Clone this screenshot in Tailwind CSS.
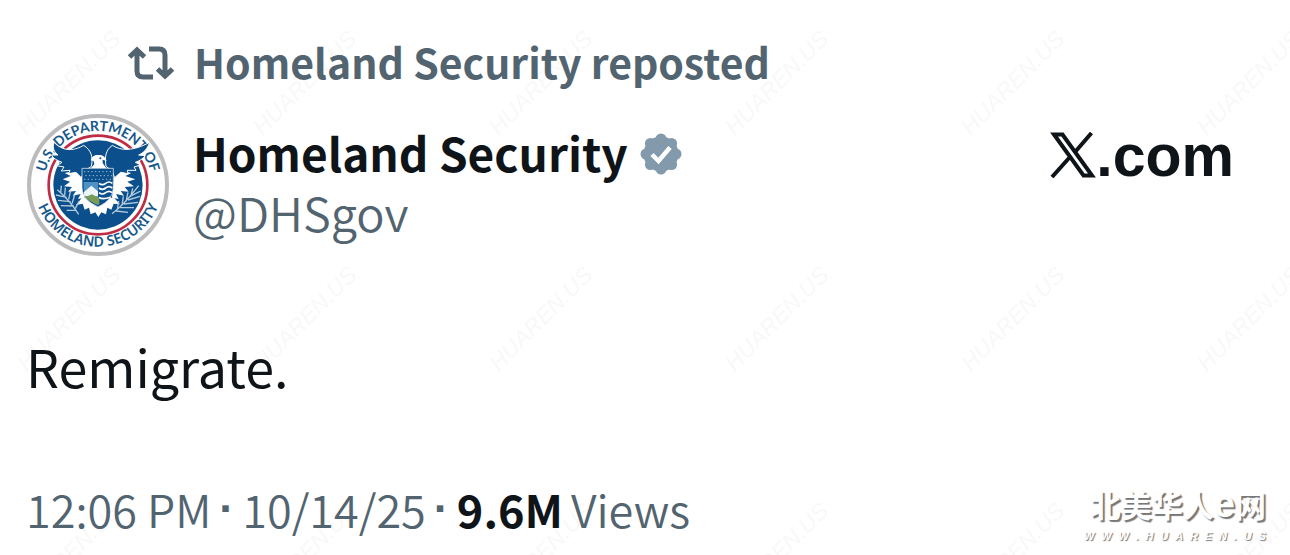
<!DOCTYPE html>
<html lang="en">
<head>
<meta charset="utf-8">
<meta name="viewport" content="width=device-width, initial-scale=1">
<title>Homeland Security on X</title>
<script src="https://cdn.jsdelivr.net/npm/@tailwindcss/browser@4"></script>
</head>
<body class="relative min-h-screen overflow-x-hidden bg-white font-['Noto_Sans_CJK_SC',sans-serif] text-[#0f1419]">
<svg class="pointer-events-none absolute inset-0 h-full w-full" aria-hidden="true">
  <defs>
    <pattern id="mark" width="236" height="236" patternUnits="userSpaceOnUse">
      <text transform="translate(70 84) rotate(-45)" text-anchor="middle" dominant-baseline="middle" font-family="Liberation Sans, sans-serif" font-style="italic" font-size="23" fill="#f8f8f8">HUAREN.US</text>
    </pattern>
  </defs>
  <rect width="100%" height="100%" fill="url(#mark)"/>
</svg>
<article class="relative pt-7">
  <div class="flex h-[66px] items-center gap-5 pl-32 text-[#536471]">
    <svg class="mt-1 h-9 w-[46px] shrink-0" viewBox="0 0 46 36" fill="none" stroke="currentColor" stroke-width="5" aria-hidden="true">
      <path d="M1.500 12 9 5 16.500 12M9 6v20q0 6 6 6h10M21 4h10q6 0 6 6v20M29.500 24l7.500 7L44.500 24"/>
    </svg>
    <p class="text-[41px] leading-none font-bold">Homeland Security reposted</p>
  </div>
  <header class="flex items-start justify-between pt-5 pr-14 pl-[27px]">
    <div class="flex items-start gap-6">
      <svg class="h-[142px] w-[142px] shrink-0" viewBox="-213 -213 426 426" role="img" aria-label="U.S. Department of Homeland Security seal">
        <defs>
          <path id="topring" d="M-153 53A162 162 0 1 1 153 53"/>
          <path id="bottomring" d="M-195 -10A195 195 0 0 0 195 -10"/>
        </defs>
        <circle r="207" fill="#fff" stroke="#bcbcbe" stroke-width="12"/>
        <circle r="148" fill="#fff" stroke="#c02c43" stroke-width="8"/>
        <circle r="134" fill="#0b4f8c"/>
        <g fill="#17588b" font-weight="600">
          <text text-anchor="middle" font-family="Lato, sans-serif" font-weight="700" font-size="42"><textPath href="#topring" startOffset="50%">U.S. DEPARTMENT OF</textPath></text>
          <text text-anchor="middle" font-family="Noto Sans, sans-serif" font-size="43"><textPath href="#bottomring" startOffset="50%">HOMELAND SECURITY</textPath></text>
        </g>
        <path d="M-50-50-72-42-100-36-82-27-106-17-84-10-102 4-78 6-90 20-66 18-76 32-52 27-60 42-40 38ZM50-50 72-42 100-36 82-27 112-17 88-10 108 4 80 6 92 20 68 18 78 32 54 27 62 42 42 38Z" fill="#fff"/>
        <path d="M-132-128C-100-96-67-105-43-119-20-104-14-84-20-56L-40-42-50-22-66-38-88-34-84-44-110-42-102-54-124-58-108-68C-121-73-134-79-140-90L-120-90C-132-100-137-109-132-128ZM155-128C105-101 70-102 43-119 22-104 20-84 24-56L42-42 50-22 68-38 90-34 88-44 114-44 108-54 128-60 112-68C124-73 134-77 142-88L122-90C137-97 147-106 155-128Z" fill="#0b4f8c" stroke="#fff" stroke-width="3"/>
        <path d="M-22-74C-18-87-10-91 3-90 17-90 23-82 26-72L14-76 14-66 25-50H-22L-11-62-13-72Z" fill="#fff"/>
        <circle cx="7" cy="-80" r="3" fill="#0b4f8c"/>
        <path d="M-48 38-66 60-46 56-40 74-27 68-22 88-8 82 1 96 10 82 24 88 28 68 40 74 47 56 66 58 48 38Z" fill="#fff"/>
        <path d="M-48-50H46V8Q46 44 0 66-48 44-48 8Z" fill="#0b4f8c" stroke="#fff" stroke-width="2"/>
        <path d="M-43-9H0V60Q-43 40-43 8Z" fill="#4f91c4"/>
        <path d="M-43 22-20 2 0 19V34H-41Z" fill="#eef5f8"/>
        <path d="M-38 36-18 28 4 40V57L0 60Q-26 50-38 36Z" fill="#789b55"/>
        <path d="M3-5q10 8 20 0t20 0M3 9q10 8 20 0t20 0M3 23q10 8 20 0t20 0M3 37q10 8 34 0" fill="none" stroke="#fff" stroke-width="5"/>
        <path d="M-42-40H42M-38-28H42M-42-17H42" stroke="#9dc0d9" stroke-width="3" stroke-dasharray="4 7"/>
        <g fill="none" stroke="#b4cbdc" stroke-width="4">
          <path d="M-58 88Q-88 42-122 14M-64 76-94 76M-72 63-112 62M-82 50-120 46M-94 37-126 30M-68 70-56 48M-78 56-70 30M-88 43-82 16M-100 31-98 8M-112 22-110 2"/>
          <path d="M42 86Q78 60 122 2M54 78 90 82M66 68 108 68M78 57 120 52M90 45 126 34M102 31 128 18M58 74 62 48M72 62 76 34M84 50 90 22M98 36 104 10"/>
        </g>
      </svg>
      <div class="pt-2">
        <div class="flex items-center gap-3">
          <h1 class="text-[46px] leading-[60px] font-bold">Homeland Security</h1>
          <svg class="mt-1 h-[42px] w-[42px] shrink-0" viewBox="0 0 42 42" role="img" aria-label="Verified government account">
            <g fill="#829aab"><circle cx="21" cy="21" r="17.500"/><circle cx="21" cy="6" r="5.500"/><circle cx="31.600" cy="10.400" r="5.500"/><circle cx="36" cy="21" r="5.500"/><circle cx="31.600" cy="31.600" r="5.500"/><circle cx="21" cy="36" r="5.500"/><circle cx="10.400" cy="31.600" r="5.500"/><circle cx="6" cy="21" r="5.500"/><circle cx="10.400" cy="10.400" r="5.500"/></g>
            <path d="M12 21.500l6.500 6.500L30 14.500" fill="none" stroke="#fff" stroke-width="4.500"/>
          </svg>
        </div>
        <a href="#" class="block text-[47px] leading-[60px] font-[350] text-[#536471]">@DHSgov</a>
      </div>
    </div>
    <a href="#" class="flex items-end pt-[18px]" aria-label="X.com">
      <svg class="h-[46px] w-[46px]" viewBox="0 0 46 46" fill="none" aria-hidden="true">
        <path d="M4 2.500H12.500L42 43.500H33.500ZM41.500 1 25.500 19.500M19.500 25.500 2 45" stroke="#0f1419" stroke-width="4"/>
      </svg>
      <span class="font-['Liberation_Sans',sans-serif] text-[59px] leading-[44px] font-bold">.com</span>
    </a>
  </header>
  <p class="pt-[72px] pl-[26px] text-[52px] leading-[76px]">Remigrate.</p>
  <footer class="flex items-center gap-2 pt-[75px] pl-[26px] text-[45px] leading-[60px] text-[#536471]">
    <time class="flex gap-2 font-[350]"><span>12:06 PM</span><span class="font-['Liberation_Sans',sans-serif] font-bold">·</span><span>10/14/25</span></time>
    <span class="font-['Liberation_Sans',sans-serif] font-bold">·</span>
    <a href="#" class="flex gap-2"><strong class="font-bold text-[#0f1419]">9.6M</strong><span class="font-[350]">Views</span></a>
  </footer>
</article>
<div class="absolute top-[482px] right-6 flex flex-col items-end text-white [text-shadow:2px_2px_1px_#777]" lang="zh">
  <span class="text-[31px] leading-[44px] font-bold">北美华人<span class="font-['Liberation_Sans',sans-serif] text-[38px] leading-[40px]">e</span>网</span>
  <span class="flex w-[182px] justify-between font-['Liberation_Sans',sans-serif] text-[11px] leading-5 font-bold italic [text-shadow:1px_1px_1px_#777]"><span>W</span><span>W</span><span>W</span><span>.</span><span>H</span><span>U</span><span>A</span><span>R</span><span>E</span><span>N</span><span>.</span><span>U</span><span>S</span></span>
</div>
</body>
</html>
